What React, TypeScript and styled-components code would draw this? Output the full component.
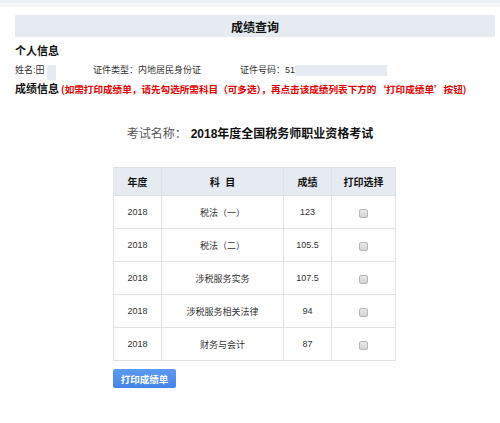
import * as React from 'react'
import styled, { createGlobalStyle } from 'styled-components'

const GlobalStyle = createGlobalStyle`
  html, body {
    margin: 0;
    padding: 0;
    background: #fff;
    font-family: "Liberation Sans", "Noto Sans CJK SC", sans-serif;
    color: #222;
  }
`

const TopStrip = styled.div`
  height: 7px;
  border-top: 3px solid #eceff3;
  box-sizing: border-box;
  background: #f4f6f9;
`

const Page = styled.div`
  padding: 8px 5px 0 15px;
`

const TitleBar = styled.div`
  height: 22px;
  background: #e5ebf1;
  display: flex;
  align-items: center;
  justify-content: center;
  font-size: 12px;
  font-weight: bold;
  color: #111;
`

const SectionTitle = styled.div<{ $gap?: number }>`
  margin-top: ${p => p.$gap ?? 7}px;
  height: 14px;
  line-height: 14px;
  font-size: 11px;
  font-weight: bold;
  color: #111;
  display: flex;
  align-items: center;
`

const Notice = styled.span`
  font-family: "Noto Sans CJK SC", sans-serif;
  color: #e60000;
  font-size: 9.6px;
  font-weight: bold;
  margin-left: 2px;
`

const InfoRow = styled.div`
  margin-top: 6px;
  height: 15px;
  display: flex;
  align-items: flex-start;
  font-size: 9px;
  color: #333;
`

const InfoItem = styled.div<{ $width: number }>`
  width: ${p => p.$width}px;
  display: flex;
  align-items: center;
  height: 12px;
  line-height: 12px;
`

const Masked = styled.span<{ $w: number; $h: number; $gap?: number }>`
  display: inline-block;
  width: ${p => p.$w}px;
  height: ${p => p.$h}px;
  background: #e6ebf1;
  margin-left: ${p => p.$gap ?? 2}px;
  align-self: flex-start;
  margin-top: 1px;
`

const ExamName = styled.div`
  margin-top: 28px;
  text-align: center;
  font-size: 12px;
  color: #555;
  padding-right: 10px;

  b {
    color: #111;
    margin-left: 4px;
  }
`

const TableWrap = styled.div`
  width: 282px;
  margin: 26px auto 0;
  position: relative;
  left: -1px;
`

const Table = styled.table`
  width: 282px;
  border-collapse: collapse;
  table-layout: fixed;
  font-size: 9px;
  color: #333;

  th, td {
    border: 1px solid #e2e2e2;
    text-align: center;
    padding: 0;
  }

  th {
    height: 27px;
    background: #e6ebf1;
    font-weight: bold;
    font-size: 10px;
    color: #111;
  }

  td {
    height: 32px;
  }
`

const Check = styled.input`
  appearance: none;
  width: 9px;
  height: 9px;
  margin: 3px 0 0;
  border: 1px solid #b8b8b8;
  border-radius: 2px;
  background: linear-gradient(#e8e8e8, #d4d4d4);
  box-sizing: border-box;
  vertical-align: middle;
`

const PrintButton = styled.button`
  margin-top: 8px;
  width: 63px;
  height: 19px;
  border: none;
  border-radius: 2px;
  background: linear-gradient(#5b9bf5, #4583ea);
  color: #fff;
  font-family: inherit;
  font-size: 9.5px;
  font-weight: bold;
  padding: 0;
  cursor: pointer;
`

const rows = [
  { year: '2018', subject: '税法（一）', score: '123' },
  { year: '2018', subject: '税法（二）', score: '105.5' },
  { year: '2018', subject: '涉税服务实务', score: '107.5' },
  { year: '2018', subject: '涉税服务相关法律', score: '94' },
  { year: '2018', subject: '财务与会计', score: '87' },
]

const App = () => {
  return (
    <React.Fragment>
      <GlobalStyle />
      <TopStrip />
      <Page>
        <TitleBar>成绩查询</TitleBar>
        <SectionTitle>个人信息</SectionTitle>
        <InfoRow>
          <InfoItem $width={78}>
            姓名:田<Masked $w={9} $h={15} />
          </InfoItem>
          <InfoItem $width={147}>证件类型：内地居民身份证</InfoItem>
          <InfoItem $width={160}>
            证件号码：51<Masked $w={92} $h={11} $gap={0} />
          </InfoItem>
        </InfoRow>
        <SectionTitle $gap={3}>
          成绩信息
          <Notice>(如需打印成绩单，请先勾选所需科目（可多选），再点击该成绩列表下方的‘打印成绩单’按钮)</Notice>
        </SectionTitle>
        <ExamName>
          考试名称：<b>2018年度全国税务师职业资格考试</b>
        </ExamName>
        <TableWrap>
          <Table>
            <colgroup>
              <col style={{ width: 48 }} />
              <col style={{ width: 122 }} />
              <col style={{ width: 48 }} />
              <col style={{ width: 64 }} />
            </colgroup>
            <thead>
              <tr>
                <th>年度</th>
                <th>科&nbsp;&nbsp;目</th>
                <th>成绩</th>
                <th>打印选择</th>
              </tr>
            </thead>
            <tbody>
              {rows.map(r => (
                <tr key={r.subject}>
                  <td>{r.year}</td>
                  <td>{r.subject}</td>
                  <td>{r.score}</td>
                  <td>
                    <Check type="checkbox" />
                  </td>
                </tr>
              ))}
            </tbody>
          </Table>
          <PrintButton>打印成绩单</PrintButton>
        </TableWrap>
      </Page>
    </React.Fragment>
  )
}

export default App
